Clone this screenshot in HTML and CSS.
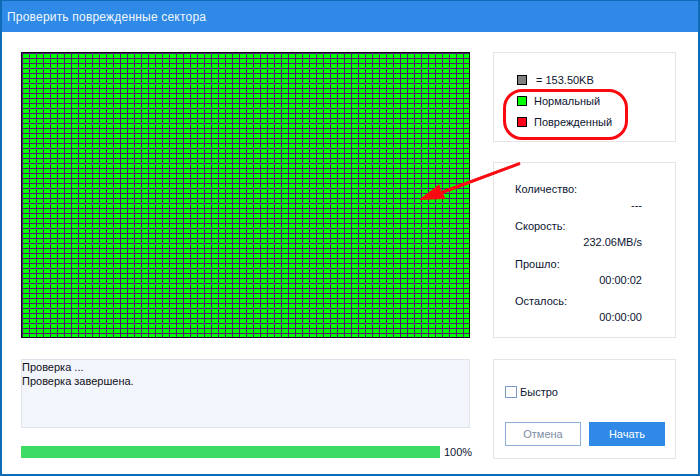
FILE: index.html
```html
<!DOCTYPE html>
<html lang="ru">
<head>
<meta charset="utf-8">
<title>Проверить поврежденные сектора</title>
<link rel="stylesheet" href="styles.css">
</head>
<body>
<div class="window">
  <header class="titlebar">Проверить поврежденные сектора</header>
  <main class="content">
    <div class="left">
      <div class="grid"></div>
      <div class="log">
        <div>Проверка ...</div>
        <div>Проверка завершена.</div>
      </div>
      <div class="progress">
        <div class="track"><div class="fill"></div></div>
        <span class="percent">100%</span>
      </div>
    </div>
    <div class="right">
      <section class="panel legend">
        <div class="legend-row"><i class="swatch gray"></i><span class="legend-size">= 153.50KB</span></div>
        <div class="legend-row"><i class="swatch green"></i><span>Нормальный</span></div>
        <div class="legend-row"><i class="swatch red"></i><span>Поврежденный</span></div>
      </section>
      <section class="panel stats">
        <div class="stat-label">Количество:</div>
        <div class="stat-value">---</div>
        <div class="stat-label">Скорость:</div>
        <div class="stat-value">232.06MB/s</div>
        <div class="stat-label">Прошло:</div>
        <div class="stat-value">00:00:02</div>
        <div class="stat-label">Осталось:</div>
        <div class="stat-value">00:00:00</div>
      </section>
      <section class="panel actions">
        <label class="quick"><i class="checkbox"></i>Быстро</label>
        <div class="buttons">
          <button class="btn btn-cancel">Отмена</button>
          <button class="btn btn-start">Начать</button>
        </div>
      </section>
    </div>
  </main>
  <div class="mark-oval"></div>
  <svg class="mark-arrow" width="700" height="476" viewBox="0 0 700 476">
    <path d="M519.5 162.5 L441 191.5 L439 185 L420 199.5 L445 198.5 L442.5 193.5 L520 164.5 Z" fill="#fa0a10" stroke="#fa0a10" stroke-width="1" stroke-linejoin="round"/>
  </svg>
</div>
</body>
</html>
```
FILE: styles.css
```css
* { box-sizing: border-box; }
html, body { margin: 0; padding: 0; }
body {
  width: 700px;
  height: 476px;
  overflow: hidden;
  background: #fff;
  font-family: "Liberation Sans", "Noto Sans", sans-serif;
  font-size: 11px;
  color: #0c1430;
}
.window {
  position: relative;
  width: 700px;
  height: 476px;
  background: #fff;
  border: 1px solid #0e6bb5;
  border-width: 1px 2px 2px 2px;
  display: flex;
  flex-direction: column;
}
.titlebar {
  height: 31px;
  flex: none;
  background: #2e8ae6;
  color: #f2f7fd;
  font-size: 12px;
  letter-spacing: 0.2px;
  line-height: 32px;
  padding-left: 5px;
}
.content {
  flex: 1;
  display: flex;
  padding: 20px 22px 0 19px;
  gap: 23px;
}
.left { width: 449px; display: flex; flex-direction: column; }
.grid {
  width: 449px;
  height: 286px;
  background-color: #00ff00;
  background-image:
    repeating-linear-gradient(90deg, #54127a 0 1px, transparent 1px 7px),
    repeating-linear-gradient(180deg, #54127a 0 1px, transparent 1px 5px);
  border: 1px solid #0a0a14;
}
.log {
  margin-top: 21px;
  height: 69px;
  background: #f3f5fc;
  border: 1px solid #dfe3ea;
  padding: 1px 0 0;
  line-height: 13.5px;
  color: #101018;
}
.progress { margin-top: 18px; display: flex; align-items: center; }
.track { width: 419px; height: 12px; background: #e6e6e6; flex: none; }
.fill { width: 100%; height: 100%; background: #3cdc64; }
.percent { margin-left: 4px; flex: none; }
.right { width: 183px; display: flex; flex-direction: column; }
.panel { border: 1px solid #e4e4e4; }
.legend {
  height: 90px;
  padding: 16px 0 0 23px;
}
.legend-row { display: flex; align-items: center; height: 21px; }
.legend-size { margin-left: 2px; }
.swatch {
  width: 10px;
  height: 10px;
  border: 1px solid #000;
  margin-right: 7px;
  flex: none;
}
.gray { background: #808080; }
.green { background: #00ff00; }
.red { background: #ff0018; }
.stats {
  height: 176px;
  margin-top: 20px;
  padding: 19px 33px 0 21px;
  line-height: 15px;
}
.stat-label { height: 15px; }
.stat-value { height: 22.3px; padding-top: 1px; text-align: right; }
.actions {
  margin-top: 21px;
  height: 100px;
  padding: 25px 10px 0 11px;
}
.quick { display: flex; align-items: center; height: 14px; }
.checkbox {
  width: 12px;
  height: 12px;
  border: 1px solid #7c98c8;
  margin-right: 3px;
}
.buttons { display: flex; justify-content: space-between; margin-top: 23px; }
.btn {
  width: 76px;
  height: 24px;
  font: inherit;
  padding: 0;
}
.btn-cancel { background: #fff; border: 1px solid #8fb0d8; color: #7c8ea4; }
.btn-start { background: #2e8ae6; border: 1px solid #2e8ae6; color: #fff; }
.mark-oval {
  position: absolute;
  left: 501px;
  top: 88px;
  width: 125px;
  height: 51px;
  border: 3px solid #fa0a10;
  border-radius: 19px;
}
.mark-arrow { position: absolute; left: -2px; top: -1px; pointer-events: none; }
```
